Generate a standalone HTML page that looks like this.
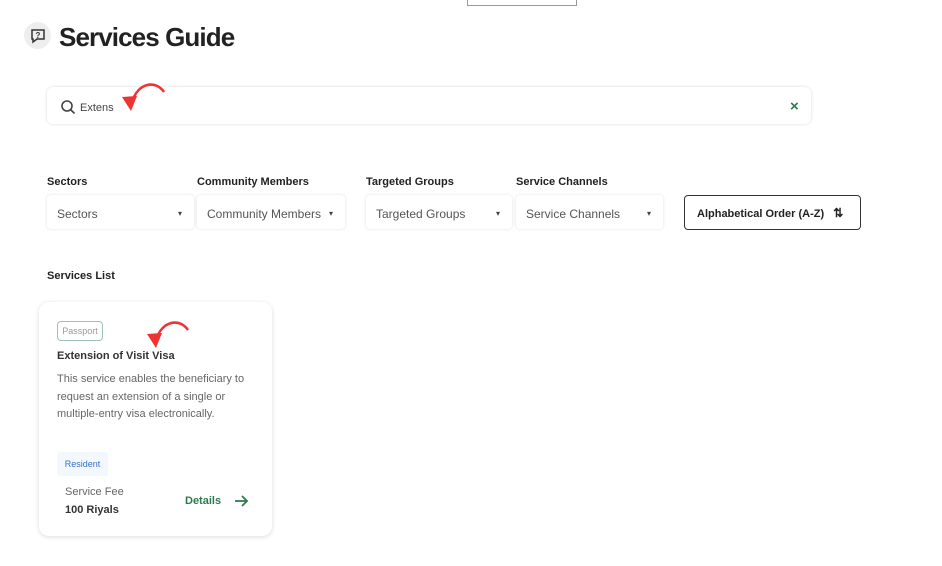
<!DOCTYPE html>
<html><head><style>
body{margin:0;width:942px;height:566px;background:#fff;font-family:"Liberation Sans Narrow","Liberation Sans",sans-serif;color:#222;position:relative;overflow:hidden}
.a{position:absolute}
.lbl{font-size:11px;font-weight:bold;color:#222}
.sel{height:34px;border-radius:4px;box-shadow:0 0 3px rgba(0,0,0,.12);font-size:12px;color:#555;line-height:38px;padding-left:10px;box-sizing:border-box}
.sel span{position:absolute;right:12px;top:0;font-size:8px;color:#444}
</style></head><body>
<div class="a" style="left:467px;top:-2px;width:110px;height:8px;border:1px solid #999;border-top:none;box-sizing:border-box"></div>
<div class="a" style="left:24px;top:22px;width:27px;height:27px;border-radius:50%;background:#eee"></div>
<svg class="a" style="left:30px;top:28px" width="16" height="16" viewBox="0 0 16 16"><path d="M2 2h12v9H7l-4 3v-3H2z" fill="none" stroke="#333" stroke-width="1.5"/><text x="8" y="10" font-size="8" font-weight="bold" text-anchor="middle" fill="#333" font-family="Liberation Sans">?</text></svg>
<div class="a" style="left:59px;top:22px;font-size:26px;font-weight:bold;color:#222;font-family:'Liberation Sans',sans-serif;letter-spacing:-0.9px">Services Guide</div>
<div class="a" style="left:47px;top:87px;width:764px;height:37px;border-radius:6px;box-shadow:0 0 3px rgba(0,0,0,.15)"></div>
<svg class="a" style="left:60px;top:99px" width="16" height="16" viewBox="0 0 16 16"><circle cx="7" cy="7" r="5" fill="none" stroke="#444" stroke-width="1.6"/><path d="M10.5 10.5l4 4" stroke="#444" stroke-width="1.6"/></svg>
<div class="a" style="left:80px;top:102px;font-size:11px;color:#444">Extens</div>
<svg class="a" style="left:116px;top:80px" width="52" height="38" viewBox="0 0 52 38"><path d="M48 12C40 0 22 2 16 22" fill="none" stroke="#e33" stroke-width="2.5"/><path d="M6 17l9 14 6-15z" fill="#e33"/></svg>
<div class="a" style="left:790px;top:98px;font-size:15px;color:#2c7a4f;font-weight:bold;font-family:'Liberation Sans'">×</div>
<div class="a lbl" style="left:47px;top:176px">Sectors</div>
<div class="a lbl" style="left:197px;top:176px">Community Members</div>
<div class="a lbl" style="left:366px;top:176px">Targeted Groups</div>
<div class="a lbl" style="left:516px;top:176px">Service Channels</div>
<div class="a sel" style="left:47px;top:195px;width:147px">Sectors<span>▾</span></div>
<div class="a sel" style="left:197px;top:195px;width:148px">Community Members<span>▾</span></div>
<div class="a sel" style="left:366px;top:195px;width:146px">Targeted Groups<span>▾</span></div>
<div class="a sel" style="left:516px;top:195px;width:147px">Service Channels<span>▾</span></div>
<div class="a" style="left:684px;top:195px;width:177px;height:35px;border:1.5px solid #333;border-radius:4px;box-sizing:border-box;font-size:11px;font-weight:bold;line-height:34px;padding-left:12px">Alphabetical Order (A-Z) <span style="margin-left:6px;font-size:12px">⇅</span></div>
<div class="a lbl" style="left:47px;top:270px">Services List</div>
<div class="a" style="left:39px;top:302px;width:233px;height:234px;border-radius:10px;box-shadow:0 1px 5px rgba(0,0,0,.15)"></div>
<div class="a" style="left:57px;top:321px;width:46px;height:20px;border:1px solid #9cc3b4;border-radius:4px;box-sizing:border-box;font-size:9px;color:#999;text-align:center;line-height:18px">Passport</div>
<div class="a" style="left:57px;top:350px;font-size:11px;font-weight:bold;color:#333">Extension of Visit Visa</div>
<svg class="a" style="left:140px;top:318px" width="52" height="38" viewBox="0 0 52 38"><path d="M48 12C40 0 22 2 16 22" fill="none" stroke="#e33" stroke-width="2.5"/><path d="M7 16l9 14 6-15z" fill="#e33"/></svg>
<div class="a" style="left:57px;top:371px;font-size:11px;color:#666;line-height:17.5px;width:210px">This service enables the beneficiary to request an extension of a single or multiple-entry visa electronically.</div>
<div class="a" style="left:57px;top:452px;width:51px;height:24px;background:#f2f8fd;border-radius:3px;font-size:9px;color:#3a6fc4;line-height:24px;text-align:center">Resident</div>
<div class="a" style="left:65px;top:486px;font-size:11px;color:#666">Service Fee</div>
<div class="a" style="left:65px;top:504px;font-size:11px;font-weight:bold;color:#333">100 Riyals</div>
<div class="a" style="left:185px;top:495px;font-size:11px;font-weight:bold;color:#2c7a4f">Details</div>
<svg class="a" style="left:234px;top:494px" width="15" height="14" viewBox="0 0 15 14"><path d="M1 7h12M8 2l5 5-5 5" fill="none" stroke="#2c7a4f" stroke-width="1.8"/></svg>
</body></html>
